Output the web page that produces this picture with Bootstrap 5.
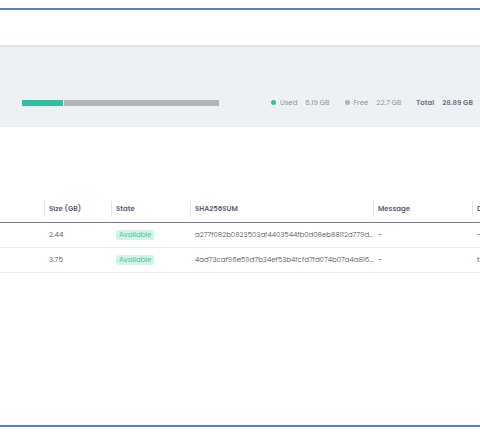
<!DOCTYPE html>
<html lang="en">
<head>
<meta charset="utf-8">
<meta name="viewport" content="width=device-width, initial-scale=1">
<title>Storage images</title>
<link href="https://cdn.jsdelivr.net/npm/bootstrap@5.3.0/dist/css/bootstrap.min.css" rel="stylesheet">
<style>
body { font-family: Poppins, Inter, sans-serif; font-size: 7px; line-height: 12px; color: #5f5b75; overflow-x: hidden; }
.frame { border-top: 2px solid #5580c8; border-bottom: 2px solid #5580c8; margin: 8px 0 7px; min-height: calc(100vh - 15px); }
.topbar { height: 37px; border-bottom: 2px solid #dfe0e4; }
.summary { background: #edf1f4; height: 80px; padding: 32px 7px 0 22px; border-bottom: 1px solid #e8eaec; color: #8f8d9a; }
.meter { width: 197px; gap: 1px; }
.meter .progress-bar { height: 6px; }
.used { background: #32bfa1; }
.free { background: #b2b2b7; }
.dot { width: 5px; height: 5px; margin-right: 4px; }
.legend { gap: 15px; }
.legend-value { margin-left: 8px; }
.total { color: #716e80; font-weight: 600; }
.images { table-layout: fixed; margin-top: 68px; }
.images th, .images td { padding: 6px 5px; height: 25px; vertical-align: middle; white-space: nowrap; color: #5f5b75; border-bottom: 1px solid #e9e9ed; }
.images th { padding: 6px 0 4px; height: 27px; font-weight: 600; border-bottom: 1px solid #7a768d; }
.images thead { border-color: #7a768d; }
.images th span { display: block; border-left: 1px solid #e0e6e8; padding: 2px 4px; }
.images .hash { font-weight: 300; color: #4b4762; }
.images .state { background: #d3f2e9; color: #4fc2a4; font-size: 7px; font-weight: 400; line-height: 10px; padding: 0 3px; border-radius: 2px; }
</style>
<script src="https://cdn.jsdelivr.net/npm/bootstrap@5.3.0/dist/js/bootstrap.bundle.min.js"></script>
</head>
<body>
<div class="frame">
  <header class="topbar bg-white"></header>
  <section class="summary d-flex align-items-center justify-content-between">
    <div class="meter d-flex">
      <div class="progress-bar used" style="width: 21%"></div>
      <div class="progress-bar free flex-grow-1"></div>
    </div>
    <div class="legend d-flex align-items-center text-nowrap">
      <div class="d-flex align-items-center"><i class="dot used rounded-circle"></i>Used<span class="legend-value">6.19 GB</span></div>
      <div class="d-flex align-items-center"><i class="dot free rounded-circle"></i>Free<span class="legend-value">22.7 GB</span></div>
      <div class="total">Total<span class="legend-value">28.89 GB</span></div>
    </div>
  </section>
  <main class="overflow-hidden">
    <table class="images table w-100 mb-0">
      <colgroup><col style="width:44px"><col style="width:67px"><col style="width:79px"><col style="width:183px"><col style="width:99px"><col></colgroup>
      <thead><tr><th></th><th><span>Size (GB)</span></th><th><span>State</span></th><th><span>SHA256SUM</span></th><th><span>Message</span></th><th><span>D</span></th></tr></thead>
      <tbody>
        <tr><td></td><td>2.44</td><td><span class="badge state">Available</span></td><td class="hash">a277f082b0823503af4403544fb0d08eb88112a779d…</td><td>-</td><td>-</td></tr>
        <tr><td></td><td>3.75</td><td><span class="badge state">Available</span></td><td class="hash">4ad73caf96e59d7b34ef53b4fcfd7fd074b07a4a816…</td><td>-</td><td>t</td></tr>
      </tbody>
    </table>
  </main>
</div>
</body>
</html>
